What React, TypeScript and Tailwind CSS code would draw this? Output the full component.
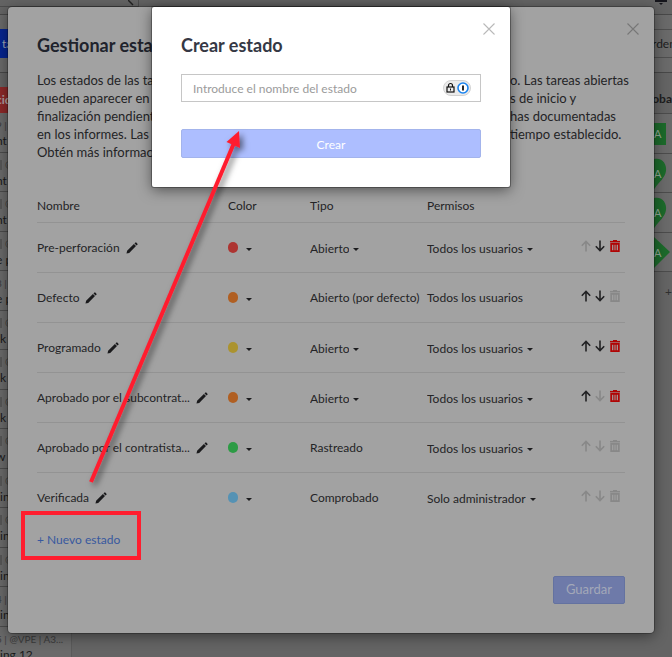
import { useState } from "react";

type Permission = { label: string; fixed?: boolean };

type Status = {
  name: string;
  dot: string;
  type: string;
  typeFixed?: boolean;
  permission: Permission;
  up: boolean;
  down: boolean;
  removable: boolean;
};

const everyone = "Todos los usuarios";

const statuses: Status[] = [
  { name: "Pre-perforación", dot: "bg-[#ad3431]", type: "Abierto", permission: { label: everyone }, up: false, down: true, removable: true },
  { name: "Defecto", dot: "bg-[#b05f22]", type: "Abierto (por defecto)", typeFixed: true, permission: { label: everyone, fixed: true }, up: true, down: true, removable: false },
  { name: "Programado", dot: "bg-[#ab932f]", type: "Abierto", permission: { label: everyone }, up: true, down: true, removable: true },
  { name: "Aprobado por el subcontrat...", dot: "bg-[#b05f22]", type: "Abierto", permission: { label: everyone }, up: true, down: false, removable: true },
  { name: "Aprobado por el contratista...", dot: "bg-[#2d9b45]", type: "Rastreado", typeFixed: true, permission: { label: everyone }, up: false, down: false, removable: false },
  { name: "Verificada", dot: "bg-[#5592b4]", type: "Comprobado", typeFixed: true, permission: { label: "Solo administrador" }, up: false, down: false, removable: false },
];

// "cut" marks the titles that start left of the visible column
const tasks = [
  { meta: "9 |", title: "nt", cut: true },
  { meta: "@", chip: true, title: "nt", cut: true },
  { meta: "@", chip: true, title: "nt", cut: true },
  { meta: "@", chip: true, title: "e p", cut: true },
  { meta: "8 |", title: "e p", cut: true },
  { meta: "@", chip: true, title: "k" },
  { meta: "@", chip: true, title: "k" },
  { meta: "@", chip: true, title: "k" },
  { meta: "@", chip: true, title: "w t", cut: true },
  { meta: "@", chip: true, title: "in" },
  { meta: "@", chip: true, title: "in" },
  { meta: "@", chip: true, title: "in" },
  { meta: "4 |", title: "in" },
  { meta: "5 | @VPE | A3...", title: "ing 12" },
];

const pins = [
  "M0 9h12v22H0z",
  "M0 5c8-2 13 5 12 12-1 7-7 11-11 17l-1 1z",
  "M0 5c8-2 13 5 12 12-1 7-7 11-11 17l-1 1z",
  "M0 4l16 15L0 35z",
];

function Caret() {
  return (
    <svg viewBox="0 0 6 3" className="h-[3px] w-1.5 shrink-0" aria-hidden="true">
      <path d="M0 0h6L3 3z" fill="#1c1c1e" />
    </svg>
  );
}

function Pencil() {
  return (
    <svg viewBox="0 0 12 12" className="size-3" aria-hidden="true">
      <path d="M.5 11.500l.6-2.700L7.900 2l2.100 2.100-6.800 6.800zM8.500 1.400l.8-.8c.3-.3.700-.3 1 0l1.100 1.100c.3.3.3.7 0 1l-.8.8z" fill="#1a1a1c" />
    </svg>
  );
}

function Arrow({ up, active }: { up?: boolean; active: boolean }) {
  return (
    <svg
      viewBox="0 0 10 12"
      className="h-3 w-2.5"
      fill="none"
      stroke={active ? "#222224" : "#888888"}
      strokeWidth="1.6"
      aria-hidden="true"
    >
      <path d={up ? "M5 11.500V1.500M.8 5.700L5 1.500l4.200 4.200" : "M5 .5v10M.8 6.300L5 10.500l4.200-4.200"} />
    </svg>
  );
}

function Trash({ active }: { active: boolean }) {
  return (
    <svg viewBox="0 0 10 12" className="h-3 w-2.5" fill="none" stroke={active ? "#b00505" : "#888888"} aria-hidden="true">
      <path d="M0 1.700h10" strokeWidth="1.500" />
      <path d="M3 .6h4" strokeWidth="1.200" />
      <path d="M1.200 3.900h7.600v7.200H1.200z" strokeWidth="1.800" />
      <path d="M3.900 4v7M6.100 4v7" strokeWidth="1.200" />
    </svg>
  );
}

function Cross({ color }: { color: string }) {
  return (
    <svg viewBox="0 0 12 12" className="size-3" stroke={color} strokeWidth="1.1" aria-hidden="true">
      <path d="M.5.5l11 11M11.500.5l-11 11" />
    </svg>
  );
}

function Dropdown({ label, value }: { label: string; value: string }) {
  return (
    <span className="flex items-center gap-1 pt-0.5">
      <select aria-label={label} className="field-sizing-content appearance-none bg-transparent outline-none">
        <option>{value}</option>
      </select>
      <Caret />
    </span>
  );
}

function StatusTable() {
  return (
    <table className="w-full table-fixed text-left text-xs text-[#242426]">
      <thead>
        <tr className="h-8 border-b border-[#939393]">
          <th className="w-[191px] font-normal">Nombre</th>
          <th className="w-[82px] font-normal">Color</th>
          <th className="w-[117px] font-normal">Tipo</th>
          <th className="font-normal">Permisos</th>
          <th className="w-11" aria-label="Acciones" />
        </tr>
      </thead>
      <tbody>
        {statuses.map((s) => (
          <tr key={s.name} className="h-[50px] border-b border-[#939393] last:border-b-0">
            <td className="pt-0.5">
              <div className="flex items-center gap-1.5">
                <span className="whitespace-nowrap">{s.name}</span>
                <button aria-label={`Editar ${s.name}`}>
                  <Pencil />
                </button>
              </div>
            </td>
            <td>
              <button aria-label={`Color de ${s.name}`} className="flex items-center gap-2">
                <span className={`h-[11px] w-2.5 rounded-full ${s.dot}`} />
                <span className="pt-1">
                  <Caret />
                </span>
              </button>
            </td>
            <td className="pt-0.5 whitespace-nowrap">
              {s.typeFixed ? s.type : <Dropdown label={`Tipo de ${s.name}`} value={s.type} />}
            </td>
            <td className="pt-0.5">
              {s.permission.fixed ? (
                s.permission.label
              ) : (
                <Dropdown label={`Permisos de ${s.name}`} value={s.permission.label} />
              )}
            </td>
            <td>
              <div className="flex gap-1 pb-0.5">
                <button aria-label="Subir" disabled={!s.up}>
                  <Arrow up active={s.up} />
                </button>
                <button aria-label="Bajar" disabled={!s.down}>
                  <Arrow active={s.down} />
                </button>
                <button aria-label="Eliminar" disabled={!s.removable} className="pl-px">
                  <Trash active={s.removable} />
                </button>
              </div>
            </td>
          </tr>
        ))}
      </tbody>
    </table>
  );
}

function Board() {
  return (
    <div className="text-xs">
      <div className="flex h-[15px] items-start justify-between border-b border-[#484848] pr-1">
        <div className="flex h-[7px] w-[139px] items-end justify-end overflow-hidden border-r border-b border-[#4d4d4d] pr-1">
          <svg viewBox="0 0 6 6" className="size-1.5" stroke="#222222" strokeWidth="1.500" aria-hidden="true">
            <path d="M0 0l5 5" />
          </svg>
        </div>
        <svg viewBox="0 0 14 5" className="h-[5px] w-3.5" fill="#16161c" aria-hidden="true">
          <path d="M1 0h12v2H1zM5 3h4L7 5z" />
        </svg>
      </div>
      <div className="flex h-[58px] items-center justify-between border-b border-[#484848] bg-[#6a6a6a]">
        <button className="h-[29px] w-24 bg-[#062590] pl-0.5 text-left text-[#a0a5b5]">ta</button>
        <button className="h-[29px] w-5 border-y border-[#4f4f4f] text-left text-[#1d1d1d]">rden</button>
      </div>
      <div className="flex items-start justify-between">
        <div className="w-[72px] border-r border-[#5a5a5a] pt-3.5">
          <div className="h-[26px] bg-[#8d2929] -indent-1 leading-[26px] font-bold text-[#b0a0a0]">cid</div>
          <ul className="bg-[#6a6a6a]">
            {tasks.map((t, i) => (
              <li key={i} className="border-b border-[#4c4c4c] whitespace-nowrap odd:h-10 even:h-[39px]">
                <div className={t.chip ? "flex h-5 items-center gap-[3px] pt-1 text-[10px] text-[#3c3c3c]" : "h-5 pt-1 -indent-1 text-[10px] leading-4 text-[#3c3c3c]"}>
                  {t.chip && <span className="h-2.5 w-0.5 bg-[#575757]" />}
                  {t.meta}
                </div>
                <div className={t.cut ? "-indent-1 leading-4 text-[#1a1a1a]" : "leading-4 text-[#1a1a1a]"}>{t.title}</div>
              </li>
            ))}
          </ul>
        </div>
        <div className="w-5">
          <div className="flex h-[41px] items-end justify-end border-b border-[#4c4c4c] pb-1.5 font-bold text-[#1d1d1d]">
            roba
          </div>
          {pins.map((d, i) => (
            <div key={i} className="border-b border-[#4c4c4c] bg-[#6a6a6a] odd:h-[39px] even:h-10">
              <svg viewBox="0 0 18 39" className="ml-0.5 h-[39px] w-[18px]" aria-hidden="true">
                <path d={d} fill="#1c6a2b" />
                <text x="0" y="24" fontSize="11" fill="#92a896">
                  A
                </text>
              </svg>
            </div>
          ))}
          <div className="h-10 text-right leading-10 text-[#303030]">+</div>
        </div>
      </div>
    </div>
  );
}

function ManageDialog() {
  return (
    <section
      role="dialog"
      aria-labelledby="manage-title"
      className="w-full rounded-sm bg-[#a2a2a2] px-[29px] pt-4 pb-[29px] shadow-[0_3px_14px_rgba(0,0,0,0.45),0_0_0_1px_rgba(0,0,0,0.25)]"
    >
      <div className="flex h-3 justify-end -mr-3.5">
        <button aria-label="Cerrar">
          <Cross color="#777777" />
        </button>
      </div>
      <h2 id="manage-title" className="text-lg leading-5 font-bold text-[#20232c]">
        Gestionar estados
      </h2>
      <div className="mt-4 flex justify-between text-[13px] leading-[18px] text-[#242426]">
        <p>
          Los estados de las tareas
          <br />
          pueden aparecer en la
          <br />
          finalización pendiente
          <br />
          en los informes. Las ta
          <br />
          Obtén más información
        </p>
        <p className="w-[115px] whitespace-nowrap">
          o. Las tareas abiertas
          <br />
          s de inicio y
          <br />
          has documentadas
          <br />
          tiempo establecido.
        </p>
      </div>
      <div className="mt-[29px]">
        <StatusTable />
      </div>
      <a href="#nuevo" className="mt-2 inline-block text-xs leading-5 text-[#38599f]">
        + Nuevo estado
      </a>
      <div className="mt-[26px] flex justify-end">
        <button className="h-7 w-18 rounded-xs border border-[#6472a0] bg-[#6e7aa9] text-[13px] text-[#a3a8b8]">
          Guardar
        </button>
      </div>
    </section>
  );
}

function CreateDialog() {
  const [name, setName] = useState("");

  return (
    <section
      role="dialog"
      aria-labelledby="create-title"
      className="w-[358px] rounded-xs bg-white px-[29px] pt-4 pb-[29px] shadow-[0_3px_14px_rgba(0,0,0,0.5),0_0_0_1px_rgba(0,0,0,0.3)]"
    >
      <div className="flex h-3 justify-end -mr-3.5">
        <button aria-label="Cerrar">
          <Cross color="#b9b9b9" />
        </button>
      </div>
      <h2 id="create-title" className="text-lg leading-5 font-bold text-[#353844]">
        Crear estado
      </h2>
      <div className="mt-[19px] flex h-7 items-center border border-[#c6c6c6] pr-[9px] pl-[11px]">
        <input
          aria-label="Nombre del estado"
          value={name}
          onChange={(e) => setName(e.target.value)}
          placeholder="Introduce el nombre del estado"
          className="min-w-0 flex-1 pt-0.5 text-xs outline-none placeholder:text-[#9b9b9b]"
        />
        <svg viewBox="0 0 28 16" className="h-4 w-7" fill="none" aria-hidden="true">
          <rect x=".5" y=".5" width="27" height="15" rx="7.500" fill="#ebebeb" stroke="#d2d2d2" />
          <path d="M5.500 7V5.500a2 2 0 0 1 4 0V7" stroke="#111111" strokeWidth="1.200" />
          <rect x="4" y="7" width="7" height="5" stroke="#111111" strokeWidth="1.200" />
          <path d="M7.500 8.500v2" stroke="#111111" />
          <circle cx="20" cy="8" r="5" fill="#ffffff" stroke="#1a84f0" strokeWidth="1.600" />
          <path d="M20 5.500v5" stroke="#111111" strokeWidth="1.800" />
        </svg>
      </div>
      <button className="mt-[27px] h-[29px] w-full rounded-xs border border-[#a3b4ec] bg-[#adbeff] pt-0.5 text-xs text-white">
        Crear
      </button>
    </section>
  );
}

export default function App() {
  return (
    <div className="relative h-screen overflow-hidden bg-[#646464] font-['Lato',sans-serif]">
      <Board />
      <div className="absolute inset-0 pt-[7px] pr-[18px] pl-2">
        <ManageDialog />
      </div>
      <div className="absolute inset-x-0 top-0 flex justify-center pt-[7px] pr-2.5">
        <CreateDialog />
      </div>
      {/* Anotaciones: recuadro y flecha */}
      <svg
        viewBox="0 0 260 580"
        className="pointer-events-none absolute top-0 left-0 h-[580px] w-[260px]"
        aria-hidden="true"
      >
        <defs>
          <filter id="shade" x="-20%" y="-10%" width="140%" height="120%">
            <feDropShadow dx="3" dy="3" stdDeviation="3" floodOpacity="0.55" />
          </filter>
        </defs>
        <g filter="url(#shade)">
          <path d="M91 482L234 143" stroke="#ff1d2e" strokeWidth="4" />
          <path d="M239 131l1 17-13.500-6z" fill="#ff1d2e" />
        </g>
        <rect x="23" y="513" width="116" height="45" fill="none" stroke="#ff1d2e" strokeWidth="4" />
      </svg>
    </div>
  );
}
